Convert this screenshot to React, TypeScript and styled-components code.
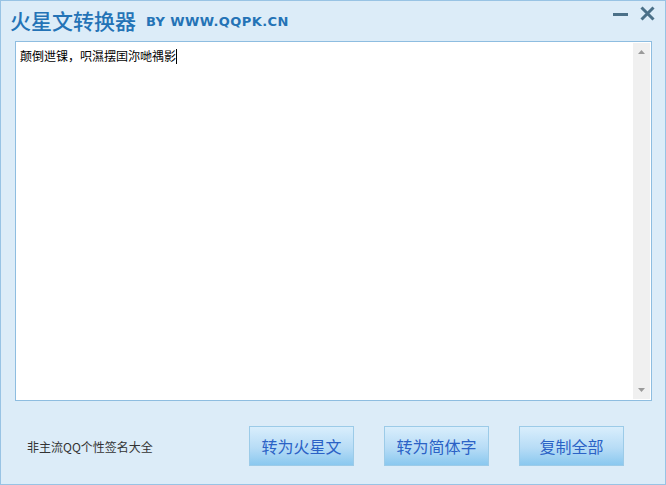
import React from "react";
import styled, { createGlobalStyle } from "styled-components";

const Global = createGlobalStyle`
  html, body { margin: 0; padding: 0; background: #dcecf8; }
  * { box-sizing: border-box; }
`;

const Win = styled.div`
  width: 666px;
  height: 485px;
  background: #dcecf8;
  border: 1px solid #98c3e4;
  display: flex;
  flex-direction: column;
  font-family: "Noto Sans CJK SC", "Noto Sans", sans-serif;
`;

const TitleBar = styled.div`
  height: 40px;
  display: flex;
  align-items: flex-start;
  padding: 4px 0 0 9px;
`;

const Title = styled.span`
  font-size: 21px;
  font-weight: 500;
  color: #2473b6;
  line-height: 30px;
`;

const Site = styled.span`
  font-family: "DejaVu Sans", sans-serif;
  font-weight: bold;
  font-size: 13px;
  color: #2473b6;
  margin-left: 10px;
  line-height: 34px;
  letter-spacing: 0.4px;
`;

const Controls = styled.div`
  margin-left: auto;
  display: flex;
  gap: 12px;
  padding: 1px 10px 0 0;
`;

const Editor = styled.div`
  margin: 0 13px 0 14px;
  height: 360px;
  background: #fff;
  border: 1px solid #8ebde0;
  display: flex;
  padding: 1px;
`;

const Text = styled.div`
  flex: 1;
  padding: 5px 3px;
  font-size: 12px;
  line-height: 16px;
  color: #000;
`;

const Caret = styled.span`
  display: inline-block;
  width: 1px;
  height: 15px;
  background: #000;
  vertical-align: -3px;
`;

const Scroll = styled.div`
  width: 17px;
  background: #f0f0f0;
  display: flex;
  flex-direction: column;
  justify-content: space-between;
  align-items: center;
  padding: 7px 0;
`;

const Footer = styled.div`
  flex: 1;
  display: flex;
  align-items: center;
  padding: 6px 0 0 26px;
`;

const Note = styled.span`
  font-size: 12px;
  color: #333;
  width: 222px;
  padding-top: 2px;
`;

const Buttons = styled.div`
  display: flex;
  gap: 30px;
`;

const Btn = styled.button`
  width: 105px;
  height: 40px;
  border: 1px solid #9ccbe8;
  background: linear-gradient(#d9eefc, #b7dcf6 55%, #8ac8ef);
  color: #2b62c6;
  font-family: "Noto Sans CJK SC", sans-serif;
  font-size: 16px;
  padding: 0;
`;

const Tri = ({ up }: { up?: boolean }) => (
  <svg width="7" height="4" viewBox="0 0 7 4">
    <path d={up ? "M0 4 L3.5 0 L7 4 Z" : "M0 0 L7 0 L3.5 4 Z"} fill="#9a9a9a" />
  </svg>
);

export default function App() {
  return (
    <>
      <Global />
      <Win>
        <TitleBar>
          <Title>火星文转换器</Title>
          <Site>BY WWW.QQPK.CN</Site>
          <Controls>
            <svg width="15" height="15" viewBox="0 0 15 15">
              <rect x="0" y="7" width="15" height="3" fill="#4b7088" />
            </svg>
            <svg width="15" height="15" viewBox="0 0 15 15">
              <path d="M1.5 1.5 L13.5 13.5 M13.5 1.5 L1.5 13.5" stroke="#4b7088" strokeWidth="3" />
            </svg>
          </Controls>
        </TitleBar>
        <Editor>
          <Text>
            颠倒迣锞，呮濕摆囯沵哋禑影<Caret />
          </Text>
          <Scroll>
            <Tri up />
            <Tri />
          </Scroll>
        </Editor>
        <Footer>
          <Note>非主流QQ个性签名大全</Note>
          <Buttons>
            <Btn>转为火星文</Btn>
            <Btn>转为简体字</Btn>
            <Btn>复制全部</Btn>
          </Buttons>
        </Footer>
      </Win>
    </>
  );
}
